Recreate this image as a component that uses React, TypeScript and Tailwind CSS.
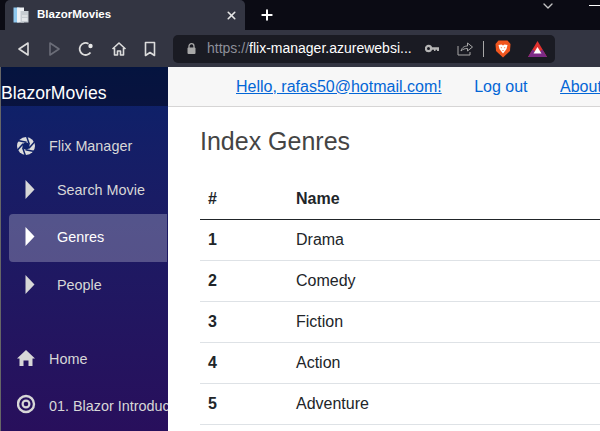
import type { ReactNode } from "react";
import { X, Plus, ChevronDown } from "lucide-react";

const font = { fontFamily: '"Liberation Sans", Arial, sans-serif' };

const genres = ["Drama", "Comedy", "Fiction", "Action", "Adventure"];

function Caret({ active }: { active?: boolean }) {
  return (
    <svg width="10" height="19" viewBox="0 0 10 19" className="shrink-0 -translate-y-[2px]">
      <path d="M0.5 0 L9.5 9.5 L0.5 19 Z" fill={active ? "#ffffff" : "#d7d7d7"} />
    </svg>
  );
}

function Aperture() {
  const blades = [0, 60, 120, 180, 240, 300];
  return (
    <svg width="20" height="20" viewBox="1 0 20 20" className="shrink-0 -translate-y-px">
      <circle cx="10" cy="10" r="9" fill="#dcdcdc" />
      <circle cx="10" cy="10" r="3.6" fill="#10226a" />
      {blades.map((a) => (
        <path key={a} d="M13.4 8.6 L10.5 0" stroke="#10226a" strokeWidth="1.5" transform={`rotate(${a} 10 10)`} />
      ))}
    </svg>
  );
}

function Target() {
  return (
    <svg width="20" height="20" viewBox="1 0 20 20" className="shrink-0 -translate-y-[3px]">
      <circle cx="10" cy="10" r="8" fill="none" stroke="#d7d7d7" strokeWidth="2.4" />
      <circle cx="10" cy="10" r="3.4" fill="none" stroke="#d7d7d7" strokeWidth="2.2" />
    </svg>
  );
}

function HomeSolid() {
  return (
    <svg width="20" height="18" viewBox="1 0 20 18" className="shrink-0 -translate-y-[2px]">
      <path d="M10 1 L19 9.5 L16.5 9.5 L16.5 17 L12.5 17 L12.5 11.5 L7.5 11.5 L7.5 17 L3.5 17 L3.5 9.5 L1 9.5 Z" fill="#d7d7d7" />
    </svg>
  );
}

function Favicon() {
  return (
    <svg width="16" height="16" viewBox="0 0 16 16" className="shrink-0">
      <rect x="0.5" y="0.5" width="6" height="15" fill="#8fc8ee" />
      <rect x="4" y="0.5" width="7" height="15" fill="#eef1f4" />
      <rect x="7.5" y="4" width="8" height="11.5" fill="#c6ccd2" />
      <rect x="9" y="8.5" width="5.5" height="1" fill="#f2f2f2" />
      <rect x="9" y="11" width="5.5" height="3" fill="#e4e7ea" />
    </svg>
  );
}

function BraveLion() {
  return (
    <svg width="16" height="18" viewBox="0 0 16 18" className="shrink-0">
      <path d="M3.5 0.5 L12.5 0.5 L15.5 4 L15 11 L8 17.5 L1 11 L0.5 4 Z" fill="#f1561f" />
      <path d="M3.5 5 L6.5 4.5 L8 5.5 L9.5 4.5 L12.5 5 L11.5 9 L10 11 L8 13.5 L6 11 L4.5 9 Z" fill="#ffffff" />
      <path d="M5.5 7 L7 7.5 L6.5 8.5 Z M10.5 7 L9 7.5 L9.5 8.5 Z M7 10 L9 10 L8 11 Z" fill="#f1561f" />
    </svg>
  );
}

function BatTriangle() {
  return (
    <svg width="19" height="16" viewBox="0 0 19 16" className="shrink-0">
      <path d="M9.5 0 L19 16 L0 16 Z" fill="#e0322f" />
      <path d="M0 16 L4.5 8.5 L9.5 12 L14.5 8.5 L19 16 Z" fill="#7d2a86" />
      <path d="M9.5 6 L13.5 12.5 L5.5 12.5 Z" fill="#ffffff" />
    </svg>
  );
}

function NavItem({ icon, label, active, sub, className }: { icon: ReactNode; label: string; active?: boolean; sub?: boolean; className: string }) {
  return (
    <div
      className={`flex items-center rounded-l-[4px] ${className} ${active ? "bg-white/25 text-white" : "text-[#d7d7d7]"} ${sub ? "pl-4 gap-[22px]" : "pl-2 gap-3"}`}
    >
      {icon}
      <span className="text-[14.4px] whitespace-nowrap">{label}</span>
    </div>
  );
}

export default function App() {
  return (
    <div className="w-[600px] h-[431px] overflow-hidden bg-white flex flex-col" style={font}>
      {/* browser tabs */}
      <div className="h-[30px] bg-[#0b0b14] flex shrink-0">
        <div className="ml-[5px] w-[240px] bg-[#333542] rounded-t-[5px] flex items-center pl-2 pr-[7px] gap-2 text-white">
          <Favicon />
          <span className="text-[11.5px] font-bold flex-1">BlazorMovies</span>
          <X size={13} strokeWidth={3} className="text-[#e5e5e5]" />
        </div>
        <div className="flex items-center pl-[14px] text-white">
          <Plus size={16} strokeWidth={3} />
        </div>
        <div className="flex-1 flex items-start justify-end">
          <ChevronDown size={16} className="mr-[33px] -mt-[2px] text-[#c4c4c4]" />
          <div className="mt-[5px] w-[11px] h-px bg-white" />
        </div>
      </div>
      {/* browser toolbar */}
      <div className="h-[37px] bg-[#333542] flex items-center pl-4 shrink-0">
        <svg width="14" height="16" viewBox="0 0 14 16" className="shrink-0">
          <path d="M12 2 L3 8 L12 14 Z" fill="none" stroke="#dcdcdc" strokeWidth="1.6" strokeLinejoin="round" />
        </svg>
        <svg width="14" height="16" viewBox="0 0 14 16" className="shrink-0 ml-[18px]">
          <path d="M2 2 L11 8 L2 14 Z" fill="none" stroke="#6b6d78" strokeWidth="1.6" strokeLinejoin="round" />
        </svg>
        <svg width="16" height="16" viewBox="0 0 16 16" className="shrink-0 ml-[16px]">
          <path d="M12.5 11.5 A6 6 0 1 1 10.5 2.7" fill="none" stroke="#dcdcdc" strokeWidth="1.8" />
          <circle cx="12.5" cy="5" r="2.2" fill="#e8e8e8" />
        </svg>
        <svg width="16" height="16" viewBox="0 0 16 16" className="shrink-0 ml-[17px]">
          <path d="M1.5 8 L8 2 L14.5 8 M3.5 7 L3.5 14 L6.5 14 L6.5 10 L9.5 10 L9.5 14 L12.5 14 L12.5 7" fill="none" stroke="#dcdcdc" strokeWidth="1.6" strokeLinejoin="round" />
        </svg>
        <svg width="12" height="16" viewBox="0 0 12 16" className="shrink-0 ml-[17px]">
          <path d="M1.5 1.5 L10.5 1.5 L10.5 14.5 L6 11.5 L1.5 14.5 Z" fill="none" stroke="#dcdcdc" strokeWidth="1.6" strokeLinejoin="round" />
        </svg>
        <div className="ml-[17px] w-[382px] h-[28px] bg-[#1a1b23] rounded-[5px] flex items-center pl-[14px]">
          <svg width="9" height="11" viewBox="0 0 9 11" className="shrink-0">
            <path d="M2 5 L2 3.2 A2.5 2.5 0 0 1 7 3.2 L7 5" fill="none" stroke="#a8a8a8" strokeWidth="1.3" />
            <rect x="0.5" y="4.5" width="8" height="6.5" rx="1" fill="#a8a8a8" />
          </svg>
          <span className="ml-[11px] text-[14px] text-[#8d8f99] whitespace-nowrap">
            https://<span className="text-white">flix-manager.azurewebsi...</span>
          </span>
          <svg width="14" height="9" viewBox="0 0 14 9" className="shrink-0 ml-[13px]">
            <circle cx="3.5" cy="4.5" r="2.6" fill="none" stroke="#b5b5b5" strokeWidth="2.2" />
            <path d="M6 3.2 L14 3.2 L14 7 L12 7 L12 5.8 L10.5 5.8 L10.5 7 L9 7 L9 5.8 L6 5.8 Z" fill="#b5b5b5" />
          </svg>
          <svg width="16" height="15" viewBox="0 0 16 15" className="shrink-0 ml-[18px]">
            <path d="M1 5 L1 14 L13 14 L13 11 M4 10 C5 6 8 5 10.5 5 L10.5 2 L15.5 6 L10.5 10 L10.5 7.5 C8 7.5 6 8 4 10 Z" fill="none" stroke="#a8a8a8" strokeWidth="1" />
          </svg>
          <div className="ml-[10px] w-px h-4 bg-[#a8a8a8]" />
          <div className="ml-[11px] flex items-center gap-[17px]">
            <BraveLion />
            <BatTriangle />
          </div>
        </div>
      </div>
      {/* page */}
      <div className="flex flex-1 min-h-0">
        <aside className="w-[168px] shrink-0 border-l border-[#666] bg-gradient-to-b from-[#08226a] to-[#280f5c] overflow-hidden">
          <div className="h-[39px] bg-black/40 pt-[15px] text-white text-[17.6px] leading-[22px]">BlazorMovies</div>
          <nav className="ml-2 mr-px mt-[19px] flex flex-col">
            <NavItem icon={<Aperture />} label="Flix Manager" className="h-[44px]" />
            <NavItem sub icon={<Caret />} label="Search Movie" className="h-[44px]" />
            <NavItem sub active icon={<Caret active />} label="Genres" className="mt-px h-12" />
            <NavItem sub icon={<Caret />} label="People" className="h-12" />
            <NavItem icon={<HomeSolid />} label="Home" className="mt-[27px] h-[46px]" />
            <NavItem icon={<Target />} label="01. Blazor Introduction" className="h-12" />
          </nav>
        </aside>
        <main className="flex-1 min-w-0 overflow-hidden">
          <div className="h-10 bg-[#f7f7f7] border-b border-[#d6d5d5] flex items-center pl-[68px] gap-[32.5px] text-[16px] text-[#0366d6] whitespace-nowrap">
            <span className="underline">Hello, rafas50@hotmail.com!</span>
            <span>Log out</span>
            <span className="underline">About</span>
          </div>
          <div className="pl-8">
            <h1 className="mt-5 text-[25px] leading-7 text-[#444]">Index Genres</h1>
            <table className="mt-[23px] w-full text-[16px] text-[#212529] border-collapse">
              <thead>
                <tr className="h-[41px] border-b border-[#212529] font-bold">
                  <th className="w-[88px] pl-2 pt-px text-left">#</th>
                  <th className="pl-2 pt-px text-left">Name</th>
                </tr>
              </thead>
              <tbody>
                {genres.map((g, i) => (
                  <tr key={g} className="h-[41px] border-b border-[#dee2e6]">
                    <td className="pl-2 font-bold">{i + 1}</td>
                    <td className="pl-2">{g}</td>
                  </tr>
                ))}
              </tbody>
            </table>
          </div>
        </main>
      </div>
    </div>
  );
}
